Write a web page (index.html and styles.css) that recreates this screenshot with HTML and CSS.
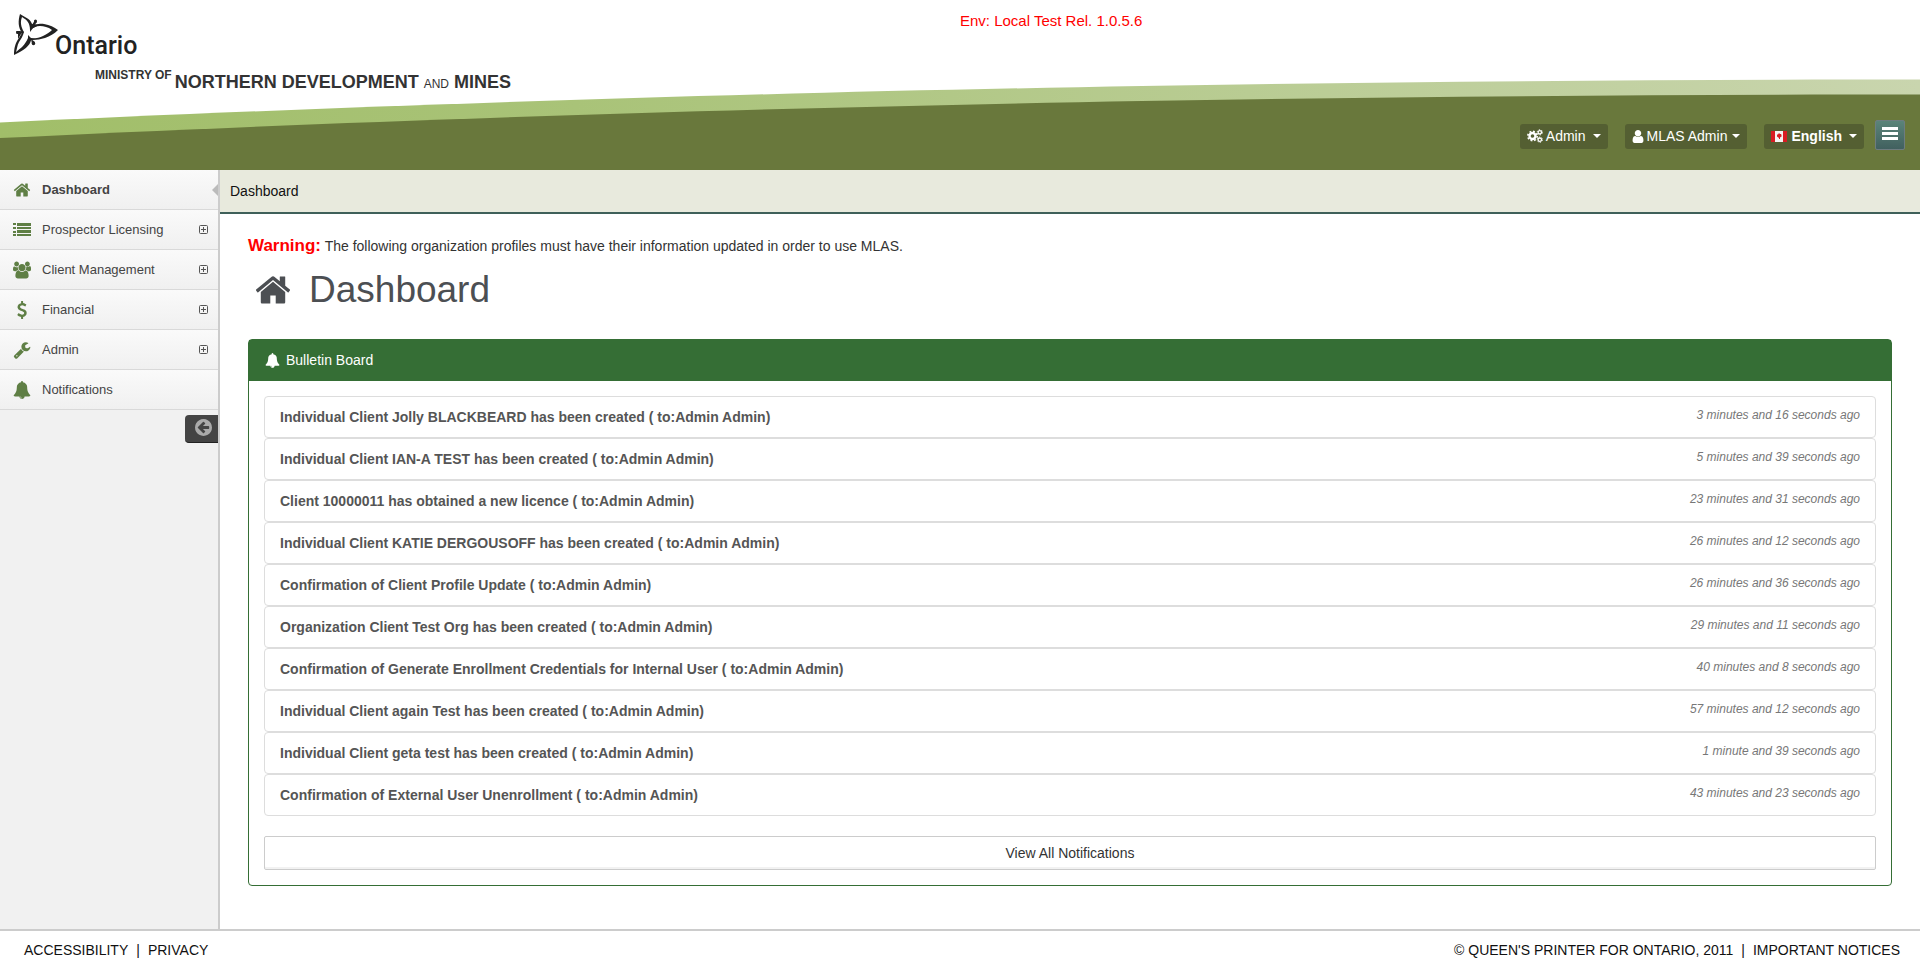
FILE: index.html
```html
<!DOCTYPE html>
<html lang="en">
<head>
<meta charset="utf-8">
<title>Dashboard</title>
<meta name="viewport" content="width=device-width, initial-scale=1">
<link rel="stylesheet" href="styles.css">
</head>
<body>
<svg class="sprite" aria-hidden="true">
  <symbol id="home" viewBox="0 0 1792 1792"><path d="M1472 992v480q0 26-19 45t-45 19h-384v-384h-256v384h-384q-26 0-45-19t-19-45v-480q0-1 .5-3t.5-3l575-474 575 474q1 2 1 6zm223-69l-62 74q-8 9-21 11h-3q-13 0-21-7l-692-577-692 577q-12 8-24 7-13-2-21-11l-62-74q-8-10-7-23.500t11-21.500l719-599q32-26 76-26t76 26l244 204v-195q0-14 9-23t23-9h192q14 0 23 9t9 23v408l219 182q10 8 11 21.500t-7 23.500z"/></symbol>
  <symbol id="list" viewBox="0 0 18 18"><path d="M0 2h3v2H0zM4 2h14v3H4zM0 6h3v2H0zM4 6h14v2H4zM0 10h3v2H0zM4 9h14v3H4zM0 13h3v2H0zM4 13h14v2H4z"/></symbol>
  <symbol id="users" viewBox="-64 0 1920 1792"><path d="M529 896q-162 5-265 128h-134q-82 0-138-40.500t-56-118.500q0-353 124-353 6 0 43.500 21t97.500 42.500 119 21.500q67 0 133-23-5 37-5 66 0 159 90 294zm1071 637q0 120-73 189.500t-194 69.500h-874q-121 0-194-69.500t-73-189.500q0-53 3.500-103.500t14-109 26.500-108.500 43-97.500 62-81 85.500-53.500 111.500-20q10 0 43 21.500t73 48 107 48 135 21.500 135-21.500 107-48 73-48 43-21.500q61 0 111.500 20t85.500 53.500 62 81 43 97.500 26.500 108.500 14 109 3.500 103.500zm-1024-1277q0 106-75 181t-181 75-181-75-75-181 75-181 181-75 181 75 75 181zm704 384q0 159-112.500 271.500t-271.500 112.500-271.500-112.500-112.500-271.500 112.500-271.500 271.500-112.500 271.500 112.500 112.500 271.500zm576 225q0 78-56 118.500t-138 40.500h-134q-103-123-265-128 90-135 90-294 0-29-5-66 66 23 133 23 59 0 119-21.500t97.500-42.500 43.500-21q124 0 124 353zm-128-609q0 106-75 181t-181 75-181-75-75-181 75-181 181-75 181 75 75 181z"/></symbol>
  <symbol id="dollar" viewBox="0 0 1792 1792"><path d="M1362 1185q0 153-99.500 263.500t-258.500 136.500v175q0 14-9 23t-23 9h-135q-13 0-22.500-9.500t-9.500-22.500v-175q-66-9-127.500-31t-101.500-44.500-74-48-46.500-37.500-17.500-18q-17-21-2-41l103-135q7-10 23-12 15-2 24 9l2 2q113 99 243 125 37 8 74 8 81 0 142.500-43t61.500-122q0-28-15-53t-33.500-42-58.500-37.500-66-32-80-32.500q-39-16-61.500-25t-61.500-26.500-62.500-31-56.500-35.500-53.500-42.500-43.500-49-35.500-58-21-66.500-8.500-78q0-138 98-242t255-134v-180q0-13 9.500-22.500t22.500-9.500h135q14 0 23 9t9 23v176q57 6 110.500 23t87 33.500 63.500 37.500 39 29 15 14q17 18 5 38l-81 146q-8 15-23 16-14 3-27-7-3-3-14.500-12t-39-26.500-58.500-32-74.500-26-85.500-11.500q-95 0-155 43t-60 111q0 26 8.500 48t29.500 41.500 39.500 33 56 31 60.500 27 70 27.500q53 20 81 31.500t76 35 75.500 42.500 62 50 53 63.500 31.500 76.500 13 94z"/></symbol>
  <symbol id="wrench" viewBox="0 0 1792 1792"><path d="M448 1472q0-26-19-45t-45-19-45 19-19 45 19 45 45 19 45-19 19-45zm644-420l-682 682q-37 37-90 37-52 0-91-37l-106-108q-38-36-38-90 0-53 38-91l681-681q39 98 114.500 173.500t173.500 114.500zm634-435q0 39-23 106-47 134-164.500 217.500t-258.500 83.500q-185 0-316.500-131.500t-131.500-316.500 131.500-316.500 316.500-131.500q58 0 121.500 16.500t107.500 46.500q16 11 16 28t-16 28l-293 169v224l193 107q5-3 79-48.500t135.500-81 70.500-35.500q15 0 23.500 10t8.500 25z"/></symbol>
  <symbol id="bell" viewBox="0 0 1792 1792"><path d="M912 1696q0-16-16-16-59 0-101.500-42.500t-42.500-101.500q0-16-16-16t-16 16q0 73 51.500 124.500t124.500 51.500q16 0 16-16zm816-288q0 52-38 90t-90 38h-448q0 106-75 181t-181 75-181-75-75-181h-448q-52 0-90-38t-38-90q50-42 91-88t85-119.500 74.500-158.500 50-206 19.500-260q0-152 117-282.500t307-158.500q-8-19-8-39 0-40 28-68t68-28 68 28 28 68q0 20-8 39 190 28 307 158.500t117 282.500q0 139 19.500 260t50 206 74.500 158.500 85 119.500 91 88z"/></symbol>
  <symbol id="user" viewBox="256 128 1280 1536"><path d="M1536 1399q0 109-62.500 187t-150.500 78h-854q-88 0-150.500-78t-62.500-187q0-85 8.500-160.500t31.500-152 58.500-131 94-89 134.500-34.500q131 128 313 128t313-128q76 0 134.500 34.500t94 89 58.500 131 31.500 152 8.500 160.500zm-256-887q0 159-112.500 271.500t-271.500 112.500-271.500-112.500-112.500-271.500 112.500-271.500 271.500-112.500 271.500 112.500 112.500 271.500z"/></symbol>
  <symbol id="circle-left" viewBox="128 128 1536 1536"><path d="M1408 960v-128q0-26-19-45t-45-19h-502l189-189q19-19 19-45t-19-45l-91-91q-18-18-45-18t-45 18l-362 362-91 91q-18 18-18 45t18 45l91 91 362 362q18 18 45 18t45-18l91-91q18-18 18-45t-18-45l-189-189h502q26 0 45-19t19-45zm256-64q0 209-103 385.500t-279.500 279.500-385.500 103-385.500-103-279.500-279.500-103-385.500 103-385.500 279.500-279.500 385.500-103 385.500 103 279.500 279.500 103 385.500z"/></symbol>
  <symbol id="plus" viewBox="0 0 9 9"><rect x=".5" y=".5" width="8" height="8" rx="1" fill="none" stroke="currentColor"/><path d="M4 2h1v2h2v1H5v2H4V5H2V4h2z"/></symbol>
  <symbol id="gears" viewBox="0 0 16 14"><g fill="none" stroke="currentColor"><circle cx="5.500" cy="7" r="3" stroke-width="2.400"/><circle cx="5.500" cy="7" r="4.700" stroke-width="1.600" stroke-dasharray="1.850 1.841"/><circle cx="12.800" cy="3.300" r="1.700" stroke-width="1.300"/><circle cx="12.800" cy="3.300" r="2.600" stroke-width="1" stroke-dasharray="1.360 1.362"/><circle cx="12.800" cy="10.700" r="1.700" stroke-width="1.300"/><circle cx="12.800" cy="10.700" r="2.600" stroke-width="1" stroke-dasharray="1.360 1.362"/></g></symbol>
</svg>

<header class="header">
  <svg class="swoosh" viewBox="0 0 1920 170" preserveAspectRatio="none" aria-hidden="true">
    <defs><linearGradient id="band"><stop offset="0" stop-color="#a1be69"/><stop offset=".3" stop-color="#a9c378"/><stop offset="1" stop-color="#c9d5ae"/></linearGradient></defs>
    <path fill="url(#band)" d="M0 122.500C480 100 1100 79.500 1920 79.500V170H0z"/>
    <path fill="#69783c" d="M0 138C480 115 1100 94.500 1920 94.500V170H0z"/>
  </svg>
  <div class="brand">
    <div class="logo">
      <svg class="trillium" viewBox="0 0 44 42" aria-hidden="true">
        <path d="M6 0C10 3 16 4 18 10C23 11 26 9 30 10C36 11 40 13 44 16C40 20 36 22 31 24C27 25 23 26 17 26C16 32 10 36 0 41C0 35 1 29 5 24L8 19C4 13 4 7 6 0zM8 3C6 8 7 13 10 18C9 22 7 25 5 28C3 32 3 35 2 38C7 34 11 31 14 24C20 25 25 24 29 22C33 20 36 18 38 16C34 13 30 12 26 12C22 12 19 14 16 16C16 9 13 6 8 3z" fill-rule="evenodd"/>
        <path d="M16 8l3 4 6-1-6 3-3 4zM2 17l4 0 4 1-3 2-3 5 0-5zM14 21l3 3 6 1-6 1-3 4z"/>
        <path d="M18 11l3-5 2 2-4 5zM17 25l4 3-1 3-2-1z"/>
        <circle cx="21.500" cy="7" r="1.500"/><circle cx="19.500" cy="29.500" r="1.700"/><circle cx="3.500" cy="18.500" r="1.500"/>
      </svg>
      <span class="logo-name">Ontario</span>
    </div>
    <div class="ministry"><span class="ministry-of">MINISTRY OF</span><span class="ministry-name"><b>NORTHERN DEVELOPMENT</b> <small>AND</small> <b>MINES</b></span></div>
  </div>
  <div class="header-side">
    <div class="env">Env: Local Test Rel. 1.0.5.6</div>
    <div class="toolbar">
      <button class="tool" type="button"><svg class="icon-gears"><use href="#gears"/></svg>Admin<span class="caret caret-far"></span></button>
      <button class="tool" type="button"><svg class="icon-user"><use href="#user"/></svg>MLAS Admin<span class="caret"></span></button>
      <button class="tool tool-lang" type="button"><svg class="flag" viewBox="0 0 16 11"><rect width="16" height="11" fill="#f4f4f4"/><path fill="#d81e24" d="M0 0h4v11H0zM12 0h4v11h-4zM8 2l1 1 1.500 0-.5 1 1 1-2 1.500V8h-1V7l-2-1.500 0-1 0-1h1z"/></svg>English<span class="caret caret-far"></span></button>
      <button class="menu" type="button" aria-label="Menu"><span></span><span></span><span></span></button>
    </div>
  </div>
</header>

<div class="layout">
  <aside class="sidebar">
    <nav class="nav">
      <a class="nav-item active" href="#"><svg class="nav-icon"><use href="#home"/></svg>Dashboard</a>
      <a class="nav-item" href="#"><svg class="nav-icon"><use href="#list"/></svg>Prospector Licensing<svg class="expand"><use href="#plus"/></svg></a>
      <a class="nav-item" href="#"><svg class="nav-icon"><use href="#users"/></svg>Client Management<svg class="expand"><use href="#plus"/></svg></a>
      <a class="nav-item" href="#"><svg class="nav-icon"><use href="#dollar"/></svg>Financial<svg class="expand"><use href="#plus"/></svg></a>
      <a class="nav-item" href="#"><svg class="nav-icon"><use href="#wrench"/></svg>Admin<svg class="expand"><use href="#plus"/></svg></a>
      <a class="nav-item" href="#"><svg class="nav-icon"><use href="#bell"/></svg>Notifications</a>
    </nav>
    <button class="collapse" type="button" aria-label="Collapse menu"><svg><use href="#circle-left"/></svg></button>
  </aside>
  <main class="main">
    <div class="breadcrumb">Dashboard</div>
    <div class="content">
      <p class="warning"><strong>Warning:</strong> The following organization profiles must have their information updated in order to use MLAS.</p>
      <h1 class="title"><svg><use href="#home"/></svg>Dashboard</h1>
      <section class="panel">
        <h2 class="panel-head"><svg><use href="#bell"/></svg>Bulletin Board</h2>
        <div class="panel-body">
          <ul class="bulletins">
            <li><b>Individual Client Jolly BLACKBEARD has been created ( to:Admin Admin)</b><em>3 minutes and 16 seconds ago</em></li>
            <li><b>Individual Client IAN-A TEST has been created ( to:Admin Admin)</b><em>5 minutes and 39 seconds ago</em></li>
            <li><b>Client 10000011 has obtained a new licence ( to:Admin Admin)</b><em>23 minutes and 31 seconds ago</em></li>
            <li><b>Individual Client KATIE DERGOUSOFF has been created ( to:Admin Admin)</b><em>26 minutes and 12 seconds ago</em></li>
            <li><b>Confirmation of Client Profile Update ( to:Admin Admin)</b><em>26 minutes and 36 seconds ago</em></li>
            <li><b>Organization Client Test Org has been created ( to:Admin Admin)</b><em>29 minutes and 11 seconds ago</em></li>
            <li><b>Confirmation of Generate Enrollment Credentials for Internal User ( to:Admin Admin)</b><em>40 minutes and 8 seconds ago</em></li>
            <li><b>Individual Client again Test has been created ( to:Admin Admin)</b><em>57 minutes and 12 seconds ago</em></li>
            <li><b>Individual Client geta test has been created ( to:Admin Admin)</b><em>1 minute and 39 seconds ago</em></li>
            <li><b>Confirmation of External User Unenrollment ( to:Admin Admin)</b><em>43 minutes and 23 seconds ago</em></li>
          </ul>
          <button class="view-all" type="button">View All Notifications</button>
        </div>
      </section>
    </div>
  </main>
</div>

<footer class="footer">
  <div class="footer-group"><a href="#">ACCESSIBILITY</a><span>|</span><a href="#">PRIVACY</a></div>
  <div class="footer-group"><a href="#">© QUEEN'S PRINTER FOR ONTARIO, 2011</a><span>|</span><a href="#">IMPORTANT NOTICES</a></div>
</footer>
</body>
</html>
```
FILE: styles.css
```css
* { box-sizing: border-box; }

body {
  margin: 0;
  min-height: 100vh;
  display: flex;
  flex-direction: column;
  background: #fff;
  color: #333;
  font: 13px/20px "Liberation Sans", Arial, sans-serif;
}

a { color: inherit; text-decoration: none; }
button { font: inherit; cursor: pointer; }
svg { display: block; fill: currentColor; flex: none; }
.sprite { position: absolute; width: 0; height: 0; }

/* Header */
.header {
  position: relative;
  display: grid;
  grid-template-columns: 1fr 1fr;
  min-height: 170px;
}
.swoosh { position: absolute; inset: 0; width: 100%; height: 100%; z-index: -1; }
.brand { padding: 14px 0 0 14px; }
.logo { display: flex; height: 48px; color: #222; }
.trillium { width: 44px; height: 42px; }
.logo-name {
  margin-left: -3px;
  padding-top: 15px;
  font: 500 25px/34px Roboto, sans-serif;
}
.ministry { display: flex; align-items: flex-start; padding: 3px 0 0 81px; white-space: nowrap; }
.ministry-of { font-size: 12px; font-weight: bold; }
.ministry-name { padding: 6px 0 0 3px; font-size: 18px; line-height: 22px; }
.ministry-name small { font-size: 12px; }

.header-side { display: flex; flex-direction: column; justify-content: space-between; }
.env { padding-top: 11px; color: #f00; font-size: 15px; }
.toolbar {
  display: flex;
  align-items: center;
  justify-content: flex-end;
  padding: 0 15px 20px 0;
  gap: 17px;
}
.tool {
  display: flex;
  align-items: center;
  height: 25px;
  margin-top: 2px;
  padding: 0 7px;
  border: 0;
  border-radius: 3px;
  background: #545f32;
  color: #fff;
  font-size: 14px;
}
.tool-lang { font-weight: bold; margin-right: -6px; }
.icon-gears { width: 16px; height: 14px; margin-right: 3px; }
.icon-user { width: 12px; height: 13px; margin-right: 3px; }
.flag { width: 16px; height: 11px; margin-right: 4px; }
.caret { margin-left: 5px; border: 4px solid transparent; border-top-color: #fff; border-bottom: 0; }
.caret-far { margin-left: 7px; }
.menu {
  display: flex;
  flex-direction: column;
  align-items: center;
  gap: 2px;
  width: 30px;
  height: 30px;
  padding: 6px 0;
  border: 1px solid #6e7c80;
  border-radius: 2px;
  background: linear-gradient(#5b8479, #41605f);
}
.menu span { width: 16px; height: 3px; background: #fff; }

/* Layout */
.layout { flex: 1; display: flex; }
.sidebar { flex: none; width: 220px; border-right: 2px solid #ccc; background: #f1f1f1; }
.nav-item {
  position: relative;
  display: flex;
  align-items: center;
  height: 40px;
  border-bottom: 1px solid #d9d9d9;
  padding: 0 10px 0 13px;
  background: linear-gradient(#fafafa, #f0f0f0);
  color: #444;
}
.nav-item.active { font-weight: bold; }
.nav-item.active::after {
  content: "";
  position: absolute;
  right: 0;
  top: 14px;
  border: 6px solid transparent;
  border-left: 0;
  border-right-color: #bbb;
}
.nav-icon { width: 18px; height: 18px; margin-right: 11px; color: #5f7f45; }
.expand { width: 9px; height: 9px; margin-left: auto; color: #555; }
.collapse {
  display: flex;
  align-items: center;
  width: 33px;
  height: 28px;
  margin: 5px 0 0 auto;
  padding: 0 10px 2px;
  border: 0;
  border-bottom: 1px solid #222;
  border-radius: 4px 0 0 4px;
  background: #444;
  color: #aaa;
}
.collapse svg { width: 17px; height: 17px; }

.main { flex: 1; min-width: 0; }
.breadcrumb {
  padding: 11px 10px;
  border-bottom: 2px solid #3f6059;
  background: #e8eadd;
  color: #111;
  font-size: 14px;
}
.content { padding: 20px 28px 40px; }
.warning { margin: 0; font-size: 14px; line-height: 24px; }
.warning strong { color: #f00; font-size: 17px; }
.title {
  display: flex;
  align-items: center;
  margin: 8px 0 25px 6px;
  color: #4c4f53;
  font-weight: normal;
  font-size: 37px;
  line-height: 48px;
}
.title svg { width: 38px; height: 38px; margin-right: 17px; }

/* Bulletin board */
.panel { border: 1px solid #356e35; border-radius: 4px; }
.panel-head {
  display: flex;
  align-items: center;
  margin: 0;
  padding: 10px 16px 11px;
  background: #356e35;
  color: #fff;
  font-weight: normal;
  font-size: 14px;
}
.panel-head svg { width: 15px; height: 15px; margin-right: 6px; }
.panel-body { padding: 15px; }
.bulletins { margin: 0 0 20px; padding: 0; list-style: none; }
.bulletins li {
  display: flex;
  justify-content: space-between;
  height: 42px;
  padding: 10px 15px;
  border: 1px solid #ddd;
  border-radius: 4px;
}
.bulletins b { color: #555; font-size: 14px; }
.bulletins em { color: #777; font-size: 12px; line-height: 16px; }
.view-all {
  display: block;
  width: 100%;
  height: 34px;
  border: 1px solid #ccc;
  border-radius: 2px;
  background: #fff;
  box-shadow: inset 0 -2px 0 #f2f2f2;
  color: #333;
  font-size: 14px;
}

/* Footer */
.footer {
  display: flex;
  justify-content: space-between;
  padding: 9px 20px 14px 24px;
  border-top: 2px solid #ccc;
  color: #111;
  font-size: 14px;
}
.footer-group { display: flex; gap: 8px; }
```
